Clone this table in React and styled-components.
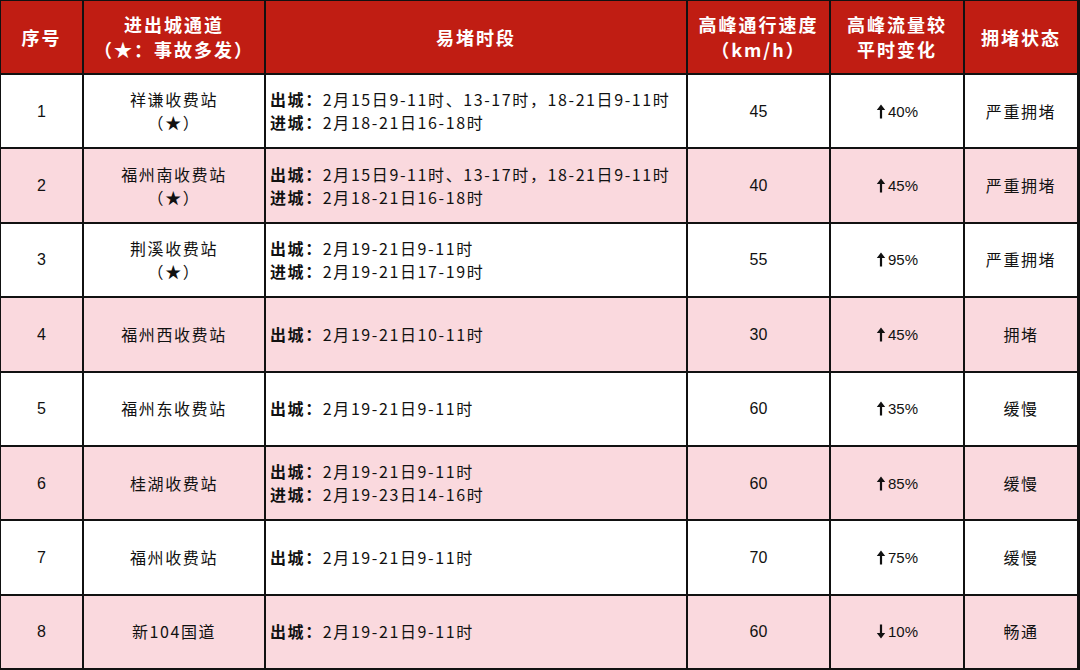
import React from "react";
import styled, { createGlobalStyle } from "styled-components";

const Global = createGlobalStyle`
  html, body { margin: 0; padding: 0; background: #fff; }
  body { font-family: "Noto Sans CJK SC", "Noto Sans", sans-serif; }
`;

const Grid = styled.div`
  width: 1080px;
  height: 670px;
  box-sizing: border-box;
  display: grid;
  grid-template-columns: 81px 180px 420px 141px 132px 112px;
  grid-template-rows: 72px repeat(8, 1fr);
  gap: 2px;
  padding: 1px 2px 2px 1px;
  background: #111;
`;

const Head = styled.div`
  background: #c01d13;
  color: #fff;
  font-weight: 700;
  font-size: 18px;
  letter-spacing: 2px;
  line-height: 25px;
  display: flex;
  flex-direction: column;
  align-items: center;
  justify-content: center;
  text-align: center;
`;

const Cell = styled.div`
  background: ${(p) => (p.$pink ? "#fad9de" : "#ffffff")};
  color: #111;
  font-size: 16px;
  letter-spacing: ${(p) => (p.$num ? "0" : "1.6px")};
  font-family: ${(p) =>
    p.$num
      ? '"Liberation Sans", Arial, sans-serif'
      : '"Noto Sans CJK SC", sans-serif'};
  line-height: 23px;
  display: flex;
  flex-direction: column;
  justify-content: center;
  align-items: ${(p) => (p.$left ? "flex-start" : "center")};
  padding-left: ${(p) => (p.$left ? "4px" : "0")};
  text-align: ${(p) => (p.$left ? "left" : "center")};
`;

const Label = styled.b`
  font-weight: 700;
`;

const Change = styled.span`
  display: inline-flex;
  align-items: center;
  gap: 2px;
  font-size: 15px;
`;

const ArrowSvg = styled.svg`
  transform: ${(p) => (p.$up ? "none" : "rotate(180deg)")};
`;

const Arrow = ({ up }) => (
  <ArrowSvg $up={up} width="10" height="15" viewBox="0 0 10 15">
    <path d="M5 0.5 L0.8 6 H3.9 V14.5 H6.1 V6 H9.2 Z" fill="#111" />
  </ArrowSvg>
);

const rows = [
  ["祥谦收费站", true, [["出城", "2月15日9-11时、13-17时，18-21日9-11时"], ["进城", "2月18-21日16-18时"]], "45", true, "40%", "严重拥堵"],
  ["福州南收费站", true, [["出城", "2月15日9-11时、13-17时，18-21日9-11时"], ["进城", "2月18-21日16-18时"]], "40", true, "45%", "严重拥堵"],
  ["荆溪收费站", true, [["出城", "2月19-21日9-11时"], ["进城", "2月19-21日17-19时"]], "55", true, "95%", "严重拥堵"],
  ["福州西收费站", false, [["出城", "2月19-21日10-11时"]], "30", true, "45%", "拥堵"],
  ["福州东收费站", false, [["出城", "2月19-21日9-11时"]], "60", true, "35%", "缓慢"],
  ["桂湖收费站", false, [["出城", "2月19-21日9-11时"], ["进城", "2月19-23日14-16时"]], "60", true, "85%", "缓慢"],
  ["福州收费站", false, [["出城", "2月19-21日9-11时"]], "70", true, "75%", "缓慢"],
  ["新104国道", false, [["出城", "2月19-21日9-11时"]], "60", false, "10%", "畅通"],
];

export default function App() {
  return (
    <>
      <Global />
      <Grid>
        <Head>序号</Head>
        <Head>
          <span>进出城通道</span>
          <span>（★：事故多发）</span>
        </Head>
        <Head>易堵时段</Head>
        <Head>
          <span>高峰通行速度</span>
          <span>（km/h）</span>
        </Head>
        <Head>
          <span>高峰流量较</span>
          <span>平时变化</span>
        </Head>
        <Head>拥堵状态</Head>
        {rows.map(([name, star, times, speed, up, pct, status], i) => {
          const pink = i % 2 === 1;
          return (
            <React.Fragment key={i}>
              <Cell $pink={pink} $num>{i + 1}</Cell>
              <Cell $pink={pink}>
                <span>{name}</span>
                {star && <span>（★）</span>}
              </Cell>
              <Cell $pink={pink} $left>
                {times.map(([k, v]) => (
                  <span key={k}>
                    <Label>{k}：</Label>
                    {v}
                  </span>
                ))}
              </Cell>
              <Cell $pink={pink} $num>{speed}</Cell>
              <Cell $pink={pink} $num>
                <Change>
                  <Arrow up={up} />
                  {pct}
                </Change>
              </Cell>
              <Cell $pink={pink}>{status}</Cell>
            </React.Fragment>
          );
        })}
      </Grid>
    </>
  );
}
